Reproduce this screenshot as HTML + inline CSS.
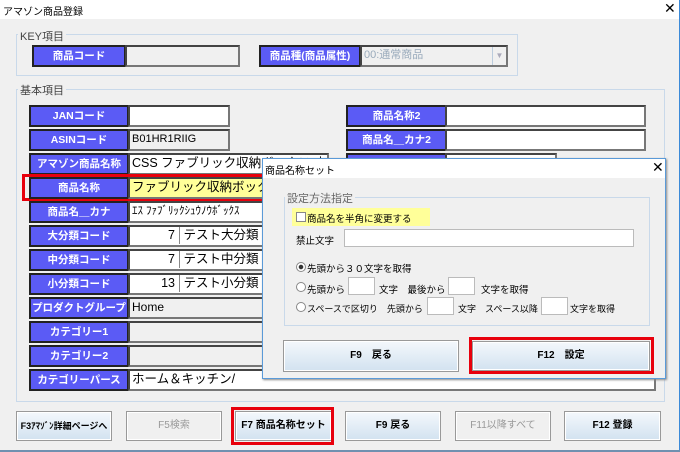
<!DOCTYPE html>
<html><head><meta charset="utf-8"><style>
*{box-sizing:border-box;margin:0;padding:0}
body{width:680px;height:452px;overflow:hidden;background:#f0f0f0;font-family:"Liberation Sans","Noto Sans CJK JP",sans-serif;font-size:11px;color:#000;position:relative}
.a{position:absolute}
.title{left:0;top:0;width:680px;height:19px;background:#fff;border-right:1px solid #3c8ad8}
.grp{border:1px solid #c9d9ea}
.gl{background:#f0f0f0;padding:0 2px;color:#444;font-size:11px}
.lb{background:#5b5bf5;border:2px solid #222;color:#fff;font-weight:bold;text-align:center;font-size:10.5px;line-height:18px;height:22px}
.in{background:#fff;border:2px solid #444;border-right-color:#777;border-bottom-color:#777;height:22px;font-size:12.5px;line-height:17px;padding-left:2px;white-space:nowrap;overflow:hidden}
.gr{background:#f0f0f0}
.btn{border:1px solid #999;background:linear-gradient(#f4f8fc,#d2e2f0);text-align:center;font-weight:bold;font-size:10px;box-shadow:inset 0 0 0 1px #fff}
.dis{background:#f0f0f0;color:#999;font-weight:normal}
.red{border:3px solid #e8000c}
.rd{width:10px;height:10px;border-radius:50%;border:1px solid #888;background:#fff}
.box{background:#fff;border:1px solid #bbb}
.dt{font-size:9.5px;white-space:nowrap}
</style></head><body>
<div class="a title"></div>
<div class="a" style="left:3px;top:3px;font-size:10px">アマゾン商品登録</div>
<div class="a" style="left:664px;top:0;font-size:14px">✕</div>
<div class="a" style="left:679px;top:0;width:1px;height:452px;background:#3c8ad8"></div>
<div class="a" style="left:0;top:450px;width:680px;height:2px;background:#7090b0"></div>

<div class="a grp" style="left:16px;top:34px;width:502px;height:42px"></div>
<div class="a gl" style="left:18px;top:28px">KEY項目</div>
<div class="a lb" style="left:32px;top:45px;width:94px">商品コード</div>
<div class="a in gr" style="left:125px;top:45px;width:115px"></div>
<div class="a lb" style="left:259px;top:45px;width:102px">商品種(商品属性)</div>
<div class="a in gr" style="left:360px;top:45px;width:148px;color:#9ab;font-size:11px">00:通常商品<span style="position:absolute;right:0;top:0;width:14px;height:18px;border-left:1px solid #bcd;color:#aab;font-size:8px;text-align:center">▼</span></div>

<div class="a grp" style="left:16px;top:89px;width:649px;height:313px"></div>
<div class="a gl" style="left:18px;top:82px">基本項目</div>

<div class="a lb" style="left:29px;top:105px;width:100px">JANコード</div>
<div class="a in" style="left:128px;top:105px;width:102px"></div>
<div class="a lb" style="left:29px;top:129px;width:100px">ASINコード</div>
<div class="a in gr" style="left:128px;top:129px;width:102px;font-size:11px">B01HR1RIIG</div>
<div class="a lb" style="left:29px;top:153px;width:100px">アマゾン商品名称</div>
<div class="a in" style="left:128px;top:153px;width:201px">CSS ファブリック収納ボックス 衣類収納</div>
<div class="a red" style="left:22px;top:174px;width:250px;height:27px"></div>
<div class="a lb" style="left:29px;top:177px;width:100px">商品名称</div>
<div class="a in" style="left:128px;top:177px;width:140px;background:#ffff99">ファブリック収納ボックス 衣類</div>
<div class="a lb" style="left:29px;top:201px;width:100px">商品名＿カナ</div>
<div class="a in" style="left:128px;top:201px;width:140px;font-size:11px">ｴｽ ﾌｧﾌﾞﾘｯｸｼｭｳﾉｳﾎﾞｯｸｽ</div>
<div class="a lb" style="left:29px;top:225px;width:100px">大分類コード</div>
<div class="a in" style="left:128px;top:225px;width:140px"><span style="display:inline-block;width:48px;text-align:right;border-right:1px solid #888;padding-right:4px">7</span> テスト大分類</div>
<div class="a lb" style="left:29px;top:249px;width:100px">中分類コード</div>
<div class="a in" style="left:128px;top:249px;width:140px"><span style="display:inline-block;width:48px;text-align:right;border-right:1px solid #888;padding-right:4px">7</span> テスト中分類</div>
<div class="a lb" style="left:29px;top:273px;width:100px">小分類コード</div>
<div class="a in" style="left:128px;top:273px;width:140px"><span style="display:inline-block;width:48px;text-align:right;border-right:1px solid #888;padding-right:4px">13</span> テスト小分類</div>
<div class="a lb" style="left:29px;top:297px;width:100px">プロダクトグループ</div>
<div class="a in gr" style="left:128px;top:297px;width:140px;font-size:12px">Home</div>
<div class="a lb" style="left:29px;top:321px;width:100px">カテゴリー1</div>
<div class="a in gr" style="left:128px;top:321px;width:140px"></div>
<div class="a lb" style="left:29px;top:345px;width:100px">カテゴリー2</div>
<div class="a in gr" style="left:128px;top:345px;width:140px"></div>
<div class="a lb" style="left:29px;top:369px;width:100px">カテゴリーパース</div>
<div class="a in" style="left:128px;top:369px;width:528px">ホーム＆キッチン/</div>

<div class="a lb" style="left:346px;top:105px;width:101px">商品名称2</div>
<div class="a in" style="left:445px;top:105px;width:201px"></div>
<div class="a lb" style="left:346px;top:129px;width:101px">商品名＿カナ2</div>
<div class="a in" style="left:445px;top:129px;width:201px"></div>
<div class="a lb" style="left:346px;top:153px;width:101px"></div>
<div class="a in" style="left:445px;top:153px;width:112px"></div>

<!-- dialog -->
<div class="a" style="left:262px;top:158px;width:404px;height:221px;background:#f0f0f0;border:1px solid #5a9ad8;box-shadow:1px 1px 2px #888"></div>
<div class="a" style="left:263px;top:159px;width:402px;height:19px;background:#fff"></div>
<div class="a" style="left:265px;top:162px;font-size:10px">商品名称セット</div>
<div class="a" style="left:652px;top:159px;font-size:14px">✕</div>
<div class="a grp" style="left:284px;top:197px;width:366px;height:129px"></div>
<div class="a gl" style="left:285px;top:190px;color:#666">設定方法指定</div>
<div class="a" style="left:292px;top:208px;width:138px;height:18px;background:#ffff99"></div>
<div class="a box" style="left:296px;top:212px;width:10px;height:10px;border-color:#888"></div>
<div class="a dt" style="left:307px;top:211px">商品名を半角に変更する</div>
<div class="a dt" style="left:296px;top:233px">禁止文字</div>
<div class="a box" style="left:344px;top:229px;width:290px;height:18px"></div>
<div class="a rd" style="left:296px;top:262px;background:radial-gradient(#333 35%,#fff 45%)"></div>
<div class="a dt" style="left:307px;top:261px">先頭から３０文字を取得</div>
<div class="a rd" style="left:296px;top:282px"></div>
<div class="a dt" style="left:307px;top:282px">先頭から</div>
<div class="a box" style="left:348px;top:277px;width:27px;height:18px"></div>
<div class="a dt" style="left:379px;top:282px">文字　最後から</div>
<div class="a box" style="left:448px;top:277px;width:27px;height:18px"></div>
<div class="a dt" style="left:481px;top:282px">文字を取得</div>
<div class="a rd" style="left:296px;top:302px"></div>
<div class="a dt" style="left:307px;top:302px;font-size:9px">スペースで区切り　先頭から</div>
<div class="a box" style="left:427px;top:297px;width:27px;height:18px"></div>
<div class="a dt" style="left:458px;top:302px;font-size:9px">文字　スペース以降</div>
<div class="a box" style="left:541px;top:297px;width:27px;height:18px"></div>
<div class="a dt" style="left:570px;top:302px;font-size:9px">文字を取得</div>
<div class="a btn" style="left:283px;top:340px;width:176px;height:32px;line-height:30px">F9　戻る</div>
<div class="a btn" style="left:472px;top:341px;width:178px;height:30px;line-height:28px">F12　設定</div>
<div class="a red" style="left:469px;top:337px;width:185px;height:37px"></div>

<!-- bottom buttons -->
<div class="a btn" style="left:16px;top:411px;width:96px;height:30px;line-height:28px;font-size:9px">F3ｱﾏｿﾞﾝ詳細ページへ</div>
<div class="a btn dis" style="left:126px;top:411px;width:96px;height:30px;line-height:28px">F5検索</div>
<div class="a btn" style="left:235px;top:411px;width:97px;height:30px;line-height:28px">F7 商品名称セット</div>
<div class="a red" style="left:231px;top:407px;width:103px;height:38px"></div>
<div class="a btn" style="left:345px;top:411px;width:96px;height:30px;line-height:28px">F9 戻る</div>
<div class="a btn dis" style="left:455px;top:411px;width:96px;height:30px;line-height:28px">F11以降すべて</div>
<div class="a btn" style="left:564px;top:411px;width:97px;height:30px;line-height:28px">F12 登録</div>
</body></html>
